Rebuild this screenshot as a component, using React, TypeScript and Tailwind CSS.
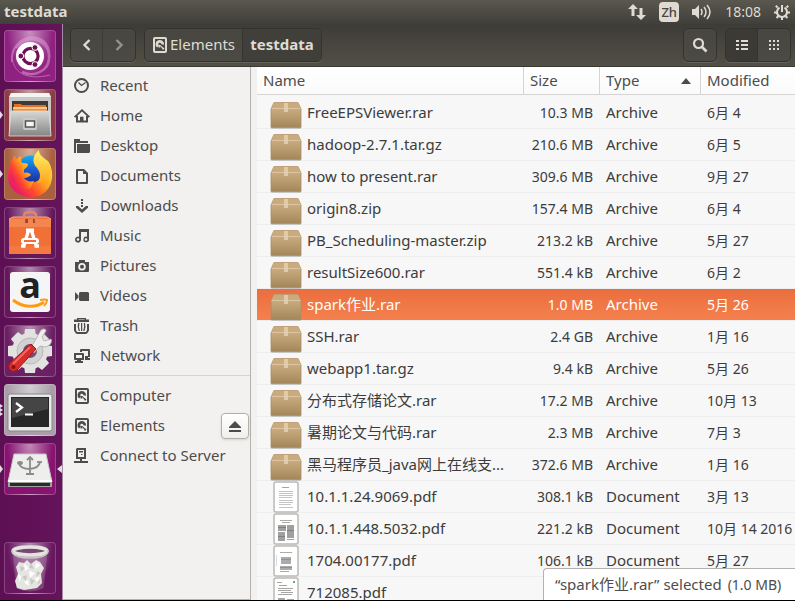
import React from "react";

type IconProps = { className?: string };

function DiskIcon({ className = "size-4" }: IconProps) {
  return (
    <svg viewBox="0 0 16 16" className={className} aria-hidden="true">
      <path fill="currentColor" fillRule="evenodd" d="M3 0h10q2 0 2 2v12q0 2-2 2H3q-2 0-2-2V2q0-2 2-2zM3 2v12h10V2z" />
      <path fill="none" stroke="currentColor" strokeWidth="2.800" d="M6 9.500A2.900 2.900 0 1 1 10.700 7.500" />
      <path fill="currentColor" d="M7.500 7.500L12.500 11.500 11 13z" />
      <path fill="currentColor" d="M6.500 8h2v2.500h-2z" />
    </svg>
  );
}

function PlaceIcon({ name }: { name: string }) {
  if (name === "Computer" || name === "Elements") return <DiskIcon className="size-4 shrink-0" />;
  return (
    <svg viewBox="0 0 16 16" className="size-4 shrink-0" fill="currentColor" aria-hidden="true">
      {name === "Recent" && (
        <g fill="none" stroke="currentColor">
          <circle cx="7.500" cy="7.500" r="6.500" strokeWidth="2" />
          <path d="M4.500 4.500l3 3 4-3" strokeWidth="1.300" />
        </g>
      )}
      {name === "Home" && (
        <g>
          <path d="M0 8.500L8 1l8 7.500-1.200 1.200L8 3.600 1.200 9.700z" />
          <path d="M2 8h2v4.500h2V8.800h3.500v3.700H12V8h2v6.500H2z" />
        </g>
      )}
      {name === "Desktop" && (
        <g>
          <path d="M0 1h6v2h8v2H2v10H0z" />
          <path d="M3 6h13v8l-1 1H3z" />
        </g>
      )}
      {name === "Documents" && (
        <path fillRule="evenodd" d="M3 1h7l4 4v10q0 1-1 1H3q-1 0-1-1V2q0-1 1-1zM4 3v11h8V6H9V3z" />
      )}
      {name === "Downloads" && (
        <path d="M7 1h2v2H7zM7 4h2v2H7zM7 7h2v2H7zM2 8h2.200L8 11.600 11.800 8H14v1.800L8 15 2 9.800z" />
      )}
      {name === "Music" && (
        <path fillRule="evenodd" d="M5 1h10v10.500a2.800 2.800 0 1 1-2-2.700V4H7v7.500a3 3 0 1 1-2-2.700zM4 10.200a1.300 1.300 0 1 0 0 2.600 1.300 1.300 0 0 0 0-2.600zm8 0a1.300 1.300 0 1 0 0 2.600 1.300 1.300 0 0 0 0-2.600z" />
      )}
      {name === "Pictures" && (
        <path fillRule="evenodd" d="M5 2h6v2h4v9q0 1-1 1H2q-1 0-1-1V4h4zM8 5a3.800 3.800 0 1 0 0 7.600A3.800 3.800 0 0 0 8 5zm0 1.800a2 2 0 1 1 0 4 2 2 0 0 1 0-4z" />
      )}
      {name === "Videos" && <path d="M6 4h8l1 1v8H6l-1-1V5zM1 4l3.500 3.500v2L1 13z" />}
      {name === "Trash" && (
        <g>
          <path d="M3 0h9v1.500h3V4H0V1.500h3zM4.500 1.400h6v-.3h-6z" />
          <path fillRule="evenodd" d="M0 6h2v6l1 2h9l1-2V6h2v6.500L13.500 15q-1 1-2 1h-8q-1 0-2-1L0 12.500z" />
          <path d="M4 5h1.500q-1.200 4 .5 8H4.700Q3 9 4 5zM7 5h1.200v8H7zM9.800 5H11q1.200 4-.5 8H9.200q1.400-4 .6-8z" />
        </g>
      )}
      {name === "Network" && (
        <g>
          <path fillRule="evenodd" d="M0 5h9q1 0 1 1v6H7v1h2v2H1v-2h2v-1H1q-1 0-1-1zM2 7v3h6V7z" />
          <path d="M6 2q0-1 1-1h8q1 0 1 1v7h-2v1h2v2h-5V8h3V3H8v1H6z" />
        </g>
      )}
      {name === "Connect to Server" && (
        <g>
          <path fillRule="evenodd" d="M3 0h9v11H8v2h6v2H0v-2h6v-2H2V1zM4 2v7h6V2z" />
          <path d="M5 3h4v1.500H5zM7 6h1.500v1H7z" />
        </g>
      )}
    </svg>
  );
}

function ArchiveIcon() {
  return (
    <svg viewBox="0 0 32 28" className="h-7 w-8" aria-hidden="true">
      <defs>
        <linearGradient id="box" x2="0" y2="1">
          <stop offset="0" stopColor="#d3b88c" />
          <stop offset="1" stopColor="#a58659" />
        </linearGradient>
      </defs>
      <path d="M1 8v19q0 1 1 1h28q1 0 1-1V8z" fill="#777" opacity=".35" />
      <path d="M4 1.500h24L31 8v18.500H1V8z" fill="url(#box)" stroke="#a88d64" strokeWidth=".8" />
      <path d="M4 1.500h24L30.500 7.500h-29z" fill="#cbaa80" />
      <path d="M1.500 7.500h29" stroke="#dcc6a0" />
      <path d="M14 2h4v9h-4z" fill="#e3d0b4" opacity=".85" />
    </svg>
  );
}

function PdfIcon({ variant }: { variant: number }) {
  return (
    <svg viewBox="0 0 26 32" className="h-8 w-[26px]" aria-hidden="true">
      <rect x="1" y="1" width="24" height="30" rx="2" fill="#fff" stroke="#bbb9b4" strokeWidth="1.500" />
      {variant === 0 && (
        <g stroke="#c4c4c4">
          <path d="M9 6.500h7" stroke="#a5a5a5" />
          <path d="M6 10.500h14M6 12.500h14M6 14.500h14M6 16.500h13M6 19.500h14M6 21.500h14M6 23.500h12M6 26.500h14" />
        </g>
      )}
      {variant === 1 && (
        <g fill="#a0a0a0">
          <path d="M7 7h12v1H7zM9 9h8v1H9z" fill="#aaa" />
          <path d="M5 12h8v6H5zM14 12h7v13h-7zM5 19h7v9H5zM14 26h7v1h-7z" />
          <path d="M5 14h8v1H5zM14 17h7v1h-7zM5 23h7v1H5z" fill="#808080" />
        </g>
      )}
      {variant === 2 && (
        <g fill="#ababab">
          <path d="M3 10h1v11H3z" fill="#cfdfee" />
          <path d="M7 7h12v1H7zM8 12h10v7H8zM7 21h12v4H7zM7 26h9v1H7z" />
          <path d="M8 14h10v1H8zM7 22h12v1H7z" fill="#929292" />
        </g>
      )}
      {variant === 3 && (
        <g fill="#a5a5a5">
          <path d="M4 5h5v1H4zM6 8h8v1H6zM5 11h15v1H5zM5 13h13v1H5zM8 15h12v1H8zM5 17h14v1H5zM5 21h7v8H5zM14 22h7v8h-7z" />
          <path d="M20 4h2v2h-2z" fill="#6aa58a" />
        </g>
      )}
    </svg>
  );
}

type FileRow = { name: string; kind: string; size: string; date: string; pdf?: number; selected?: boolean };

const files: FileRow[] = [
  { name: "FreeEPSViewer.rar", kind: "Archive", size: "10.3 MB", date: "6月 4" },
  { name: "hadoop-2.7.1.tar.gz", kind: "Archive", size: "210.6 MB", date: "6月 5" },
  { name: "how to present.rar", kind: "Archive", size: "309.6 MB", date: "9月 27" },
  { name: "origin8.zip", kind: "Archive", size: "157.4 MB", date: "6月 4" },
  { name: "PB_Scheduling-master.zip", kind: "Archive", size: "213.2 kB", date: "5月 27" },
  { name: "resultSize600.rar", kind: "Archive", size: "551.4 kB", date: "6月 2" },
  { name: "spark作业.rar", kind: "Archive", size: "1.0 MB", date: "5月 26", selected: true },
  { name: "SSH.rar", kind: "Archive", size: "2.4 GB", date: "1月 16" },
  { name: "webapp1.tar.gz", kind: "Archive", size: "9.4 kB", date: "5月 26" },
  { name: "分布式存储论文.rar", kind: "Archive", size: "17.2 MB", date: "10月 13" },
  { name: "暑期论文与代码.rar", kind: "Archive", size: "2.3 MB", date: "7月 3" },
  { name: "黑马程序员_java网上在线支...", kind: "Archive", size: "372.6 MB", date: "1月 16" },
  { name: "10.1.1.24.9069.pdf", kind: "Document", size: "308.1 kB", date: "3月 13", pdf: 0 },
  { name: "10.1.1.448.5032.pdf", kind: "Document", size: "221.2 kB", date: "10月 14 2016", pdf: 1 },
  { name: "1704.00177.pdf", kind: "Document", size: "106.1 kB", date: "5月 27", pdf: 2 },
  { name: "712085.pdf", kind: "", size: "", date: "", pdf: 3 },
];

const places = ["Recent", "Home", "Desktop", "Documents", "Downloads", "Music", "Pictures", "Videos", "Trash", "Network"];
const devices = ["Computer", "Elements", "Connect to Server"];

function LauncherArt({ name }: { name: string }) {
  return (
    <svg viewBox="0 0 52 52" className="size-[52px]" aria-hidden="true">
      {name === "Search" && (
        <g>
          <g fill="none" stroke="#e9a6dd" opacity=".5">
            <path d="M8 32C6 15 22 3 36 9c11 5 12 20 5 29" strokeWidth="2" />
            <path d="M12 18C24 2 46 10 45 28c0 12-14 20-27 14" strokeWidth="2.500" />
            <path d="M8 25C8 42 22 51 46 45" />
          </g>
          <circle cx="26" cy="26" r="14" fill="#fff" />
          <circle cx="26.500" cy="26" r="7.600" fill="none" stroke="#701158" strokeWidth="3.200" />
          <g fill="#701158" stroke="#fff" strokeWidth="1">
            <circle cx="16.800" cy="26" r="2.900" />
            <circle cx="31" cy="17.500" r="2.900" />
            <circle cx="31" cy="34.500" r="2.900" />
          </g>
        </g>
      )}
      {name === "Files" && (
        <g>
          <defs>
            <linearGradient id="cab" x2="0" y2="1"><stop stopColor="#d8d8d6" /><stop offset="1" stopColor="#858585" /></linearGradient>
          </defs>
          <path d="M7 4h38l2 5v38H5V9z" fill="#c7c7c5" />
          <path d="M7 4h38l2 4H5z" fill="#f4f4f2" />
          <path d="M8 12h36v12H8z" fill="#3c3b38" />
          <path d="M10 15h7l1 1h24v6H10z" fill="#e46f24" />
          <path d="M9 18h34v2H9z" fill="#f8c987" />
          <path d="M9 20h34v3H9z" fill="#f48a38" />
          <path d="M7 22h38l2 25H5z" fill="url(#cab)" stroke="#dededc" strokeWidth=".8" />
          <rect x="19" y="29" width="14" height="12" rx="2" fill="#c9c9c9" />
          <rect x="21.500" y="32" width="9" height="6" fill="#f6f6f6" stroke="#555" strokeWidth="1.500" />
        </g>
      )}
      {name === "Firefox" && (
        <g>
          <defs>
            <linearGradient id="ff" x1=".9" y1=".2" x2=".15" y2=".8"><stop stopColor="#ffdc3a" /><stop offset=".4" stopColor="#ff9a20" /><stop offset=".7" stopColor="#ff4a2c" /><stop offset="1" stopColor="#ea1a6c" /></linearGradient>
            <linearGradient id="fb" x2="0" y2="1"><stop stopColor="#12b0ee" /><stop offset=".5" stopColor="#1c5fd4" /><stop offset="1" stopColor="#1b2f9a" /></linearGradient>
            <linearGradient id="ffy" x2="0" y2="1"><stop stopColor="#fff36a" /><stop offset="1" stopColor="#ffa51c" /></linearGradient>
          </defs>
          <path d="M4 28C4 20 7 12 11 8l3 5h26l6 4c6 13 0 32-19 32C13 49 4 39 4 28z" fill="url(#ff)" />
          <circle cx="27" cy="21" r="13.500" fill="url(#fb)" />
          <path d="M11 8c0 2 0 3 1 5 2-3 3-4 5-5 0 3 0 5 1 7 3 0 5 0 6 1 0 3-3 4-4 6 0 2 0 2 0 3 3-1 6 0 7 2-2 1-4 3-7 3 2 3 6 4 10 3l-4 8c-10 2-19-6-20-16C5 19 8 11 11 8z" fill="url(#ff)" />
          <path d="M35 2c-7 6-7 13-2 18 4 5 4 10 0 15 8-1 15-6 14-15-1-5-3-8-6-9-3-3-6-4-6-9z" fill="url(#ffy)" />
        </g>
      )}
      {name === "Software" && (
        <g>
          <path d="M5 12l4-2h34l4 2v35H5z" fill="#f17038" />
          <path d="M5 12h42v8H5z" fill="#f4874f" />
          <path d="M5 39h42v8H5z" fill="#f37940" />
          <path d="M20 12h4v4h-4zM29 12h4v4h-4z" fill="#9e4525" />
          <path d="M5 12l4-2h34l4 2" stroke="#f8aa82" fill="none" />
          <path d="M20 17V9q0-4 6-4t6 4v8" fill="none" stroke="#ed8358" strokeWidth="2.500" />
          <path d="M25 22l-5.500 18M27 22l5.500 18M22 23.200h8M17 39h4.500M30.500 39h4.500" fill="none" stroke="#fff" strokeWidth="3.400" />
          <rect x="17" y="31" width="18" height="6" rx="3" fill="#fff" />
          <path d="M20 34h12" stroke="#f17038" strokeWidth="2" />
        </g>
      )}
      {name === "Amazon" && (
        <g>
          <rect x="6" y="6" width="40" height="40" rx="3" fill="#f6f5f5" />
          <text x="26" y="32" textAnchor="middle" className="fill-[#222] font-['Open_Sans',sans-serif] text-[36px] font-bold">a</text>
          <path d="M9 34c10 8 23 8 31 2" fill="none" stroke="#ff9a12" strokeWidth="3" />
          <path d="M36 34q5-1 7 0 0 3-3 6" fill="none" stroke="#ff9a12" strokeWidth="2" />
        </g>
      )}
      {name === "Settings" && (
        <g>
          <g fill="#e2e2e1">
            <circle cx="26" cy="26" r="18" />
            <path d="M21 4h10l1 8H20zM21 48h10l1-8H20zM4 21v10l8 1V20zM48 21v10l-8 1V20z" />
            <path d="M21 4h10l1 8H20zM21 48h10l1-8H20zM4 21v10l8 1V20zM48 21v10l-8 1V20z" transform="rotate(45 26 26)" />
          </g>
          <circle cx="26" cy="26" r="13" fill="#d2d2d2" stroke="#b9b9b9" />
          <circle cx="26" cy="26" r="7" fill="#7d4a77" />
          <path d="M32 14l5-9c3-2 5-1 5 1l-4 6 2 4 7-2c2 3-2 8-6 8l-5-1-6 7-4-4z" fill="#eeeeec" stroke="#aaa" strokeWidth=".8" />
          <path d="M27 19l5 5-19 21q-4 3-7 0-3-4 0-7z" fill="#d52e2b" stroke="#a31618" />
          <path d="M26 22L9 39" stroke="#ef6c62" strokeWidth="2" />
          <circle cx="9.500" cy="42" r="2" fill="#8a1013" />
        </g>
      )}
      {name === "Terminal" && (
        <g>
          <rect x="4" y="10" width="44" height="37" rx="2" fill="#e8e8e8" stroke="#888" />
          <rect x="7" y="13" width="38" height="30" fill="#272727" />
          <path d="M8 14h36v11L8 34z" fill="#454545" />
          <path d="M12 19l6 4.500-6 4.500M21 30.500h8" stroke="#fff" strokeWidth="2.200" fill="none" />
        </g>
      )}
      {name === "USB drive" && (
        <g>
          <path d="M10 11h32l6 28H4z" fill="#eeeeed" stroke="#c7c7c6" />
          <path d="M4 38h44v6H4z" fill="#a0a29f" />
          <path d="M6 40h40v3H6z" fill="#272c2a" />
          <path d="M4 37h44v2H4z" fill="#fff" />
          <g fill="none" stroke="#8b8b8b" strokeWidth="1.800">
            <path d="M26 15v16M15 20q1 6 11 6 9-1 10-7M22 31h8M23 17l3-3 3 3" />
            <ellipse cx="16" cy="20" rx="2" ry="1" />
            <path d="M33 19h5" />
          </g>
        </g>
      )}
      {name === "Trash can" && (
        <g>
          <path d="M9 12l4 34q13 6 26 0l4-34z" fill="#e9dce8" opacity=".22" stroke="#d8c5d4" />
          <path d="M12 25l3-5 5 1 3-3 4 4 5-4 4 2 4 6-3 6 1 9-5 5-6 1-7 1-7-2-2-7 3-7z" fill="#e5e5e2" />
          <g fill="#c9c9c4">
            <path d="M16 24l5 2-4 4zM27 21l3 6-5-1zM33 29l4 2-5 4zM18 35l5-2-1 6zM26 36l5 3-4 4zM35 38l2 2-4 3z" />
          </g>
          <g fill="#fff">
            <path d="M20 21l5 5-4 3zM32 21l5 2-6 4zM25 29l6 2-5 5zM14 31l3 4-2 5zM20 40l4-2 1 6zM31 36l5-1-3 5z" />
          </g>
          <ellipse cx="26" cy="9" rx="17" ry="4" fill="#79476f" stroke="#e4e4e1" strokeWidth="3.500" />
          <path d="M8.500 8v3q4 5 17.500 5t17.500-5V8" fill="none" stroke="#c9c9c6" strokeWidth="1.500" />
        </g>
      )}
    </svg>
  );
}

const tileFill: Record<string, string> = {
  Search: "bg-[#8f2180]",
  Files: "bg-[#8c3b45]",
  Firefox: "bg-[#a9603f]",
  Software: "bg-[#65175c]",
  Amazon: "bg-[#65175c]",
  Settings: "bg-[#6b2063]",
  Terminal: "bg-[#a99ea9]",
  "USB drive": "bg-[#871470]",
  "Trash can": "bg-[#68185f]",
};

function LauncherTile({ name }: { name: string }) {
  return (
    <li className="relative flex pl-1">
      <button aria-label={name} className={`size-[52px] rounded ${tileFill[name]}`}>
        <span className="block size-[52px] rounded border border-white/20 bg-[radial-gradient(ellipse_at_50%_0%,rgba(255,255,255,0.5),rgba(255,255,255,0)_65%)]">
          <span className="-m-px block"><LauncherArt name={name} /></span>
        </span>
      </button>
      {["Files", "Firefox", "USB drive"].includes(name) && (
        <svg viewBox="0 0 3 8" className="absolute left-0 top-[22px] h-2 w-[3px]" aria-hidden="true"><path d="M0 0l3 4-3 4z" fill="#e4dce2" /></svg>
      )}
      {name === "Terminal" && (
        <svg viewBox="0 0 3 12" className="absolute left-0 top-5 h-3 w-[3px]" aria-hidden="true"><path d="M0 0l3 2-3 2zM0 4l3 2-3 2zM0 8l3 2-3 2z" fill="#e4dce2" /></svg>
      )}
      {name === "USB drive" && (
        <svg viewBox="0 0 5 8" className="absolute right-0 top-[22px] h-2 w-[5px]" aria-hidden="true"><path d="M5 0L0 4l5 4z" fill="#e4dce2" /></svg>
      )}
    </li>
  );
}

const toolButton = "flex h-8 items-center justify-center text-[#dfdbd2]";
const toolGroup = "flex shrink-0 overflow-hidden rounded-[5px] border border-[#33322e] bg-gradient-to-b from-[#47463f] to-[#4b4a44] shadow-[0_1px_0_rgba(255,255,255,0.12)]";

function TopPanel() {
  return (
    <header className="flex h-6 shrink-0 items-center justify-between bg-gradient-to-b from-[#5a584e] to-[#403f3a] pl-1 pr-[5px] text-[#dfdbd2]">
      <h1 className="text-[15px] font-bold">testdata</h1>
      <div className="flex items-center gap-[13px]">
        <svg viewBox="0 0 18 16" className="h-4 w-[18px]" fill="currentColor" aria-label="Network">
          <path d="M5 0l5 5H6.500v7h-3V5H0zM13 16l-5-5h3.500V4h3v7H18z" />
        </svg>
        <span className="flex h-5 w-5 items-center justify-center rounded-sm bg-[#dfdbd2] text-[13px] font-medium text-[#45443f]">Zh</span>
        <svg viewBox="0 0 20 16" className="h-4 w-5" aria-label="Volume">
          <path d="M0 5h3l4-4v14l-4-4H0z" fill="currentColor" />
          <path d="M9 5q2 3 0 6M12 3q4 5 0 10M15 1q6 7 0 14" fill="none" stroke="currentColor" strokeWidth="1.500" />
        </svg>
        <time className="text-sm">18:08</time>
        <svg viewBox="0 0 16 16" className="size-4" fill="none" stroke="currentColor" aria-label="Session">
          <path d="M5.500 3.700a5 5 0 1 0 5 0M8 1v7" strokeWidth="2" />
          <path d="M3.500 3.500L1.800 1.800M12.500 3.500l1.700-1.700M3 8.500H0M13 8.500h3M4.500 12l-2 2M11.500 12l2 2M8 13v3" strokeWidth="2" />
        </svg>
      </div>
    </header>
  );
}

function Toolbar() {
  return (
    <div className="flex h-[43px] shrink-0 items-start border-b border-[#3a3934] bg-gradient-to-b from-[#3d3c37] to-[#524f46] pl-[7px] pr-1 pt-1">
      <div className={`${toolGroup} mr-2`}>
        <button aria-label="Back" className={`${toolButton} w-8 border-r border-[#3c3b36]`}>
          <svg viewBox="0 0 10 14" className="h-[14px] w-[10px]" fill="none" stroke="currentColor" strokeWidth="2.400" aria-hidden="true"><path d="M7.500 2l-5 5 5 5" /></svg>
        </button>
        <button aria-label="Forward" className={`${toolButton} w-8`}>
          <svg viewBox="0 0 10 14" className="h-[14px] w-[10px] opacity-50" fill="none" stroke="currentColor" strokeWidth="2.400" aria-hidden="true"><path d="M2.500 2l5 5-5 5" /></svg>
        </button>
      </div>
      <nav className={toolGroup} aria-label="Path">
        <button className={`${toolButton} w-[98px] gap-[2px] border-r border-[#34332f] text-[15px]`}><DiskIcon />Elements</button>
        <button className={`${toolButton} w-[78px] bg-[#403f3a] text-[15px] font-bold`}>testdata</button>
      </nav>
      <div className="flex-1" />
      <div className={`${toolGroup} mr-2`}>
        <button aria-label="Search" className={`${toolButton} w-8`}>
          <svg viewBox="0 0 16 16" className="size-4" fill="none" stroke="currentColor" aria-hidden="true"><circle cx="6.500" cy="6.500" r="4.500" strokeWidth="2.200" /><path d="M9.500 9.500l5 5" strokeWidth="2.600" /></svg>
        </button>
      </div>
      <div className={toolGroup}>
        <button aria-label="List view" className={`${toolButton} w-8 border-r border-[#34332f] bg-[#3b3a35]`}>
          <svg viewBox="0 0 12 10" className="h-[10px] w-3" fill="currentColor" aria-hidden="true"><path d="M0 0h3v2H0zM5 0h7v2H5zM0 4h3v2H0zM5 4h7v2H5zM0 8h3v2H0zM5 8h7v2H5z" /></svg>
        </button>
        <button aria-label="Grid view" className={`${toolButton} w-8`}>
          <svg viewBox="0 0 10 10" className="size-[10px]" fill="currentColor" aria-hidden="true"><path d="M0 0h2v2H0zM4 0h2v2H4zM8 0h2v2H8zM0 4h2v2H0zM4 4h2v2H4zM8 4h2v2H8zM0 8h2v2H0zM4 8h2v2H4zM8 8h2v2H8z" /></svg>
        </button>
      </div>
    </div>
  );
}

function PlaceItem({ name }: { name: string }) {
  return (
    <li className="flex h-[30px] items-center justify-between pl-[10px] pr-px">
      <a href="#" className="flex items-center gap-[10px]"><PlaceIcon name={name} />{name}</a>
      {name === "Elements" && (
        <button aria-label="Eject Elements" className="flex h-[26px] w-7 items-center justify-center rounded border border-[#b2afa9] bg-gradient-to-b from-white to-[#f0efed] shadow-sm">
          <svg viewBox="0 0 12 11" className="h-[11px] w-3" fill="currentColor" aria-hidden="true"><path d="M6 0l6 6v1H0V6zM0 9h12v2H0z" /></svg>
        </button>
      )}
    </li>
  );
}

const headCell = "flex h-7 items-center justify-between border-b border-[#d6d5d3] bg-gradient-to-b from-white to-[#fafafa] font-normal";

function FileTable() {
  return (
    <table className="w-full table-fixed border-collapse whitespace-nowrap text-left">
      <colgroup>
        <col />
        <col className="w-[76px]" />
        <col className="w-[101px]" />
        <col className="w-[95px]" />
      </colgroup>
      <thead>
        <tr className="text-[15px] text-[#4c4c4c]">
          <th className="p-0 pb-0.5"><div className={`${headCell} pl-1.5`}>Name</div></th>
          <th className="p-0 pb-0.5"><div className={`${headCell} border-l pl-1.5`}>Size</div></th>
          <th className="p-0 pb-0.5" aria-sort="ascending">
            <div className={`${headCell} border-l pl-1.5 pr-[9px]`}>
              Type
              <svg viewBox="0 0 10 6" className="h-1.5 w-[10px]" aria-hidden="true"><path d="M5 0l5 6H0z" fill="#4c4c4c" /></svg>
            </div>
          </th>
          <th className="p-0 pb-0.5"><div className={`${headCell} border-l pl-1.5`}>Modified</div></th>
        </tr>
      </thead>
      <tbody>
        {files.map((f) => (
          <tr key={f.name} aria-selected={!!f.selected} className={`h-8 ${f.selected ? "bg-gradient-to-b from-[#eb6e3d] to-[#f5814f] text-white" : ""}`}>
            <td className="p-0">
              <div className="flex h-8 items-center gap-[5px] border-b border-[#efeeee] pl-[13px] text-[15px]">
                <span className="flex h-8 w-8 shrink-0 items-end justify-center">{f.pdf === undefined ? <ArchiveIcon /> : <PdfIcon variant={f.pdf} />}</span>
                {f.name}
              </div>
            </td>
            <td className="p-0"><div className="flex h-8 items-center justify-end border-b border-[#efeeee] pr-[6px]">{f.size}</div></td>
            <td className="p-0"><div className="flex h-8 items-center border-b border-[#efeeee] pl-[7px] text-[15px]">{f.kind}</div></td>
            <td className="p-0"><div className="flex h-8 items-center border-b border-[#efeeee] pl-[7px]">{f.date}</div></td>
          </tr>
        ))}
      </tbody>
    </table>
  );
}

export default function App() {
  return (
    <div className="flex h-screen flex-col overflow-hidden border-b border-black bg-[#f2f1f0] font-['Noto_Sans','Noto_Sans_CJK_SC',sans-serif] text-sm text-[#3c3c3c]">
      <TopPanel />
      <div className="flex min-h-0 flex-1">
        <aside aria-label="Launcher" className="flex w-[63px] shrink-0 flex-col justify-between border-r border-[#a58ba2] bg-gradient-to-r from-[#5d0f54] to-[#64145a] pb-1.5 pt-1.5">
          <ul className="flex flex-col gap-[7px]">
            {["Search", "Files", "Firefox", "Software", "Amazon", "Settings", "Terminal", "USB drive"].map((n) => <LauncherTile key={n} name={n} />)}
          </ul>
          <ul><LauncherTile name="Trash can" /></ul>
        </aside>
        <div className="flex min-w-0 flex-1 flex-col">
          <Toolbar />
          <div className="flex min-h-0 flex-1">
            <nav aria-label="Places" className="w-[188px] shrink-0 border-b border-r border-[#b5b2ad] bg-[#f2f1f0] pt-1 text-[15px] text-[#4c4c4c]">
              <ul className="pl-px">{places.map((p) => <PlaceItem key={p} name={p} />)}</ul>
              <hr className="mb-[5px] mt-1 border-[#d5d4d1]" />
              <ul className="pl-px">{devices.map((p) => <PlaceItem key={p} name={p} />)}</ul>
            </nav>
            <main className="relative ml-1.5 min-w-0 flex-1 overflow-hidden bg-[#f7f7f7]">
              <FileTable />
              <div role="status" className="absolute bottom-0 right-0 flex h-8 w-[252px] items-center gap-1.5 whitespace-nowrap rounded-tl border-l border-t border-[#b5b2ad] bg-white pl-[11px] text-[#4c4c4c]">
                <span className="text-[15px]">“spark作业.rar” selected</span><span>(1.0 MB)</span>
              </div>
            </main>
          </div>
        </div>
      </div>
    </div>
  );
}
